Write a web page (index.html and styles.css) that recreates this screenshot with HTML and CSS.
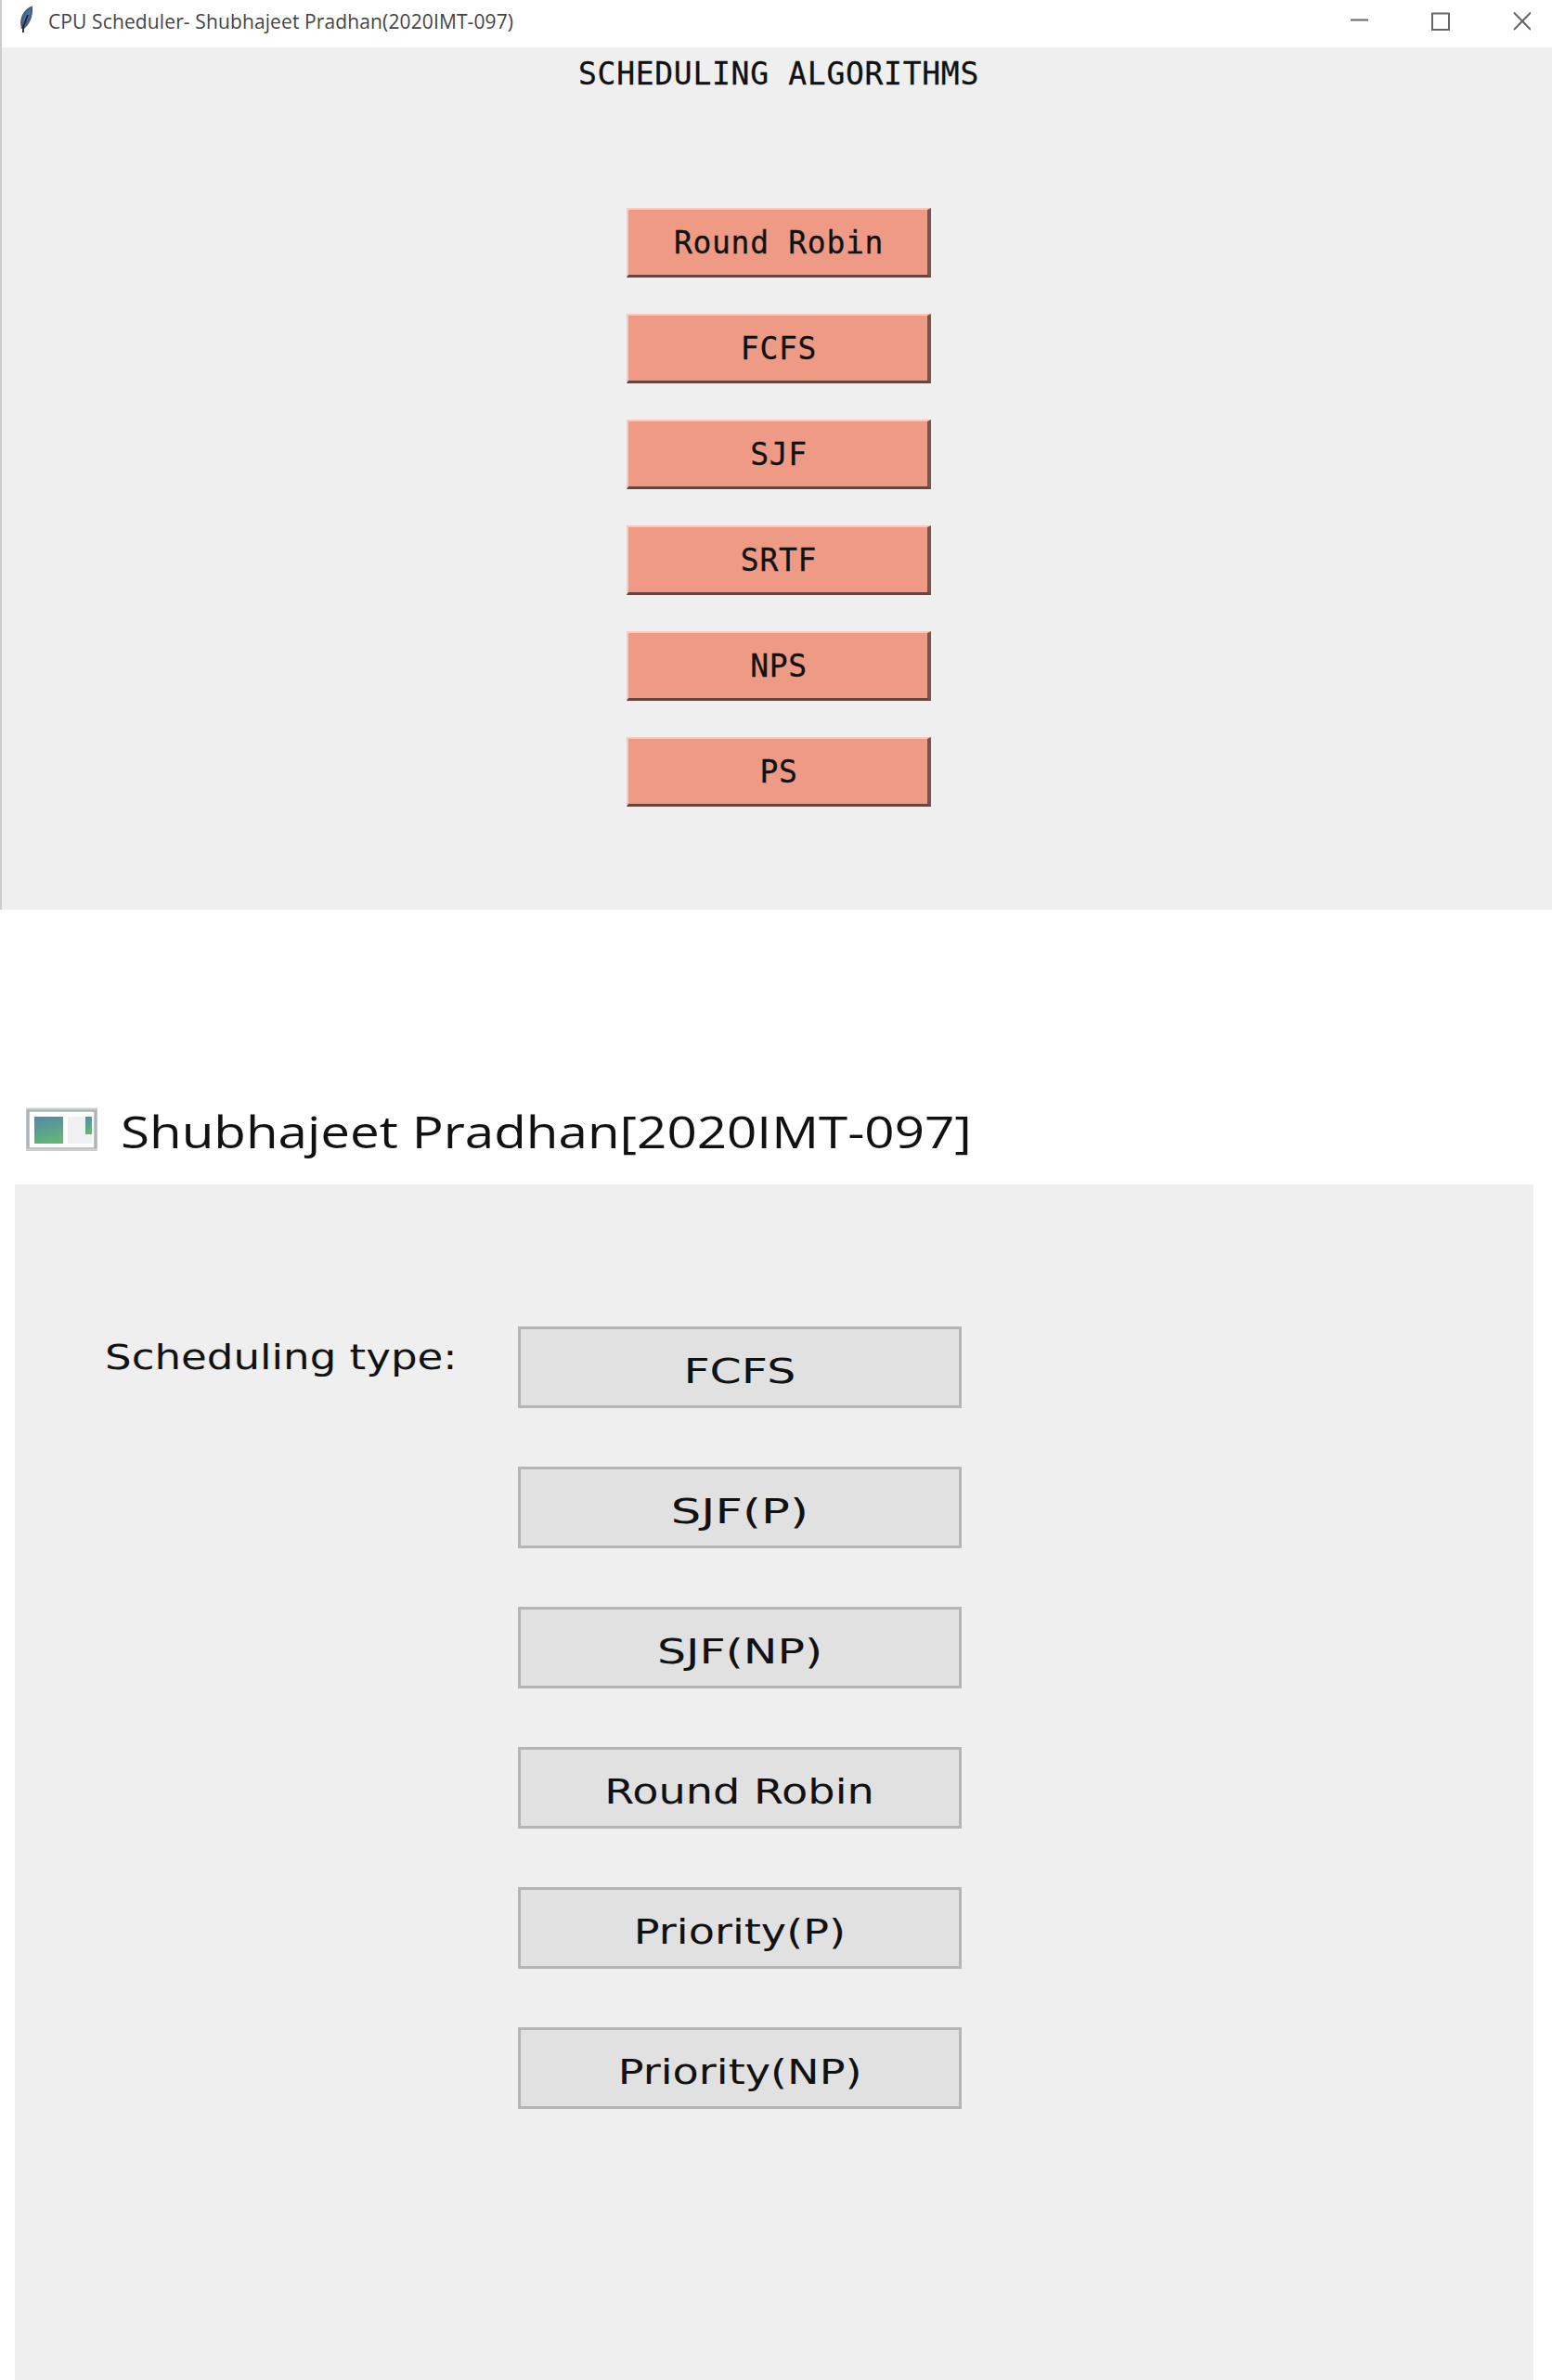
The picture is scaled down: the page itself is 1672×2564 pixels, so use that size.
FILE: index.html
```html
<!DOCTYPE html>
<html lang="en">
<head>
<meta charset="utf-8">
<title>CPU Scheduler</title>
<link rel="stylesheet" href="styles.css">
</head>
<body>
<section class="tk-window">
  <header class="tk-bar">
    <svg class="feather" width="18" height="32" viewBox="0 0 18 32"><path d="M15 .5C8 2 2 10 2 19l1 6h3c5-4 10-12 9-24.500z" fill="#4d5f73"/><path d="M13 4C8 7 4 13 5 20c5-3 8-9 8-16z" fill="#3f76b8"/><path d="M10 10 5 23v6" fill="none" stroke="#222" stroke-width="1.8"/></svg>
    <span class="tk-title">CPU Scheduler- Shubhajeet Pradhan(2020IMT-097)</span>
    <svg class="controls" width="200" height="32" viewBox="0 0 200 32" fill="none" stroke="#666" stroke-width="2"><path d="M6 15.500h19"/><rect x="94" y="8.500" width="18" height="17.500"/><path d="m182 7.500 18 18.500m0-18.500-18 18.500"/></svg>
  </header>
  <main class="tk-body">
    <h1 class="tk-heading">SCHEDULING ALGORITHMS</h1>
    <div class="tk-list">
      <button class="tk-button">Round Robin</button>
      <button class="tk-button">FCFS</button>
      <button class="tk-button">SJF</button>
      <button class="tk-button">SRTF</button>
      <button class="tk-button">NPS</button>
      <button class="tk-button">PS</button>
    </div>
  </main>
</section>
<section class="qt-window">
  <header class="qt-bar">
    <svg class="app-icon" width="78" height="48" viewBox="0 0 78 48"><defs><linearGradient id="tile" x1="0" y1="0" x2=".3" y2="1"><stop offset="0" stop-color="#5487ad"/><stop offset="1" stop-color="#62b477"/></linearGradient></defs><rect x="2" y="3" width="73" height="42" fill="#fff" stroke="#aeb3b8" stroke-width="3.500"/><path d="M0 1.500h77M0 45.500h77" stroke="#cfd2d5" stroke-width="2"/><rect x="9" y="10" width="31" height="29" fill="url(#tile)"/><rect x="45" y="10" width="26" height="29" fill="#f0f0f0"/><rect x="64" y="10" width="7" height="19" fill="url(#tile)"/></svg>
    <span class="qt-title">Shubhajeet Pradhan[2020IMT-097]</span>
  </header>
  <main class="qt-body">
    <div class="qt-label"><span class="label-text">Scheduling type:</span></div>
    <div class="qt-list">
      <button class="qt-button"><span class="wide">FCFS</span></button>
      <button class="qt-button"><span class="wider">SJF(P)</span></button>
      <button class="qt-button"><span class="wide">SJF(NP)</span></button>
      <button class="qt-button"><span class="normal">Round Robin</span></button>
      <button class="qt-button"><span class="normal">Priority(P)</span></button>
      <button class="qt-button"><span class="normal">Priority(NP)</span></button>
    </div>
  </main>
</section>
</body>
</html>
```
FILE: styles.css
```css
* { box-sizing: border-box; }
body { margin: 0; background: #fff; color: #111; width: 1672px; height: 2564px; overflow: hidden; }
button { margin: 0; padding: 0; color: #111; }

.tk-window { height: 980px; border-left: 2px solid #ccc; display: flex; flex-direction: column; }
.tk-bar { height: 51px; display: flex; align-items: flex-start; padding: 6px 23px 0 18px; }
.feather { margin-right: 14px; }
.tk-title { font: 21px/34px "Open Sans", sans-serif; color: #444; white-space: nowrap; flex: 1; letter-spacing: .12px; }
.tk-body { flex: 1; background: #efefef; display: flex; flex-direction: column; align-items: center; padding-left: 4px; }
.tk-heading { margin: 9px 0 0; font: 33px/40px "DejaVu Sans Mono", monospace; letter-spacing: .7px; white-space: pre; -webkit-text-stroke: .3px #111; }
.tk-list { margin-top: 124px; display: flex; flex-direction: column; gap: 38px; }
.tk-button { width: 328px; height: 75px; margin-bottom: 1px; background: #ee9a85; border: 2px solid #f8cabd; border-right: 4px solid #6f5752; border-bottom: 3px solid #62463f; padding: 1px 0 0 2px; font: 33px/69px "DejaVu Sans Mono", monospace; letter-spacing: .7px; -webkit-text-stroke: .3px #111; }

.qt-window { margin-top: 213px; }
.qt-bar { height: 83px; padding-left: 28px; display: flex; align-items: flex-start; }
.qt-title { margin: -4px 0 0 24px; font: 47px/60px "Open Sans", sans-serif; white-space: nowrap; transform: scaleX(1.203); transform-origin: left; }
.qt-body { margin: 0 20px 0 16px; height: 1288px; background: #efefef; display: flex; align-items: flex-start; padding: 153px 0 0 97px; }
.qt-label { width: 445px; padding-top: 3px; font: 38px/60px "DejaVu Sans", sans-serif; }
.qt-label span, .qt-button span { display: inline-block; }
.label-text { transform: scaleX(1.187); transform-origin: left; }
.qt-list { display: flex; flex-direction: column; gap: 63px; }
.qt-button { width: 478px; height: 88px; border: 3px solid #b5b5b5; background: #e1e1e1; padding-top: 4px; font: 38px/82px "DejaVu Sans", sans-serif; }
.normal { transform: scaleX(1.215); }
.wide { transform: scaleX(1.29); }
.wider { transform: scaleX(1.35); }
```
